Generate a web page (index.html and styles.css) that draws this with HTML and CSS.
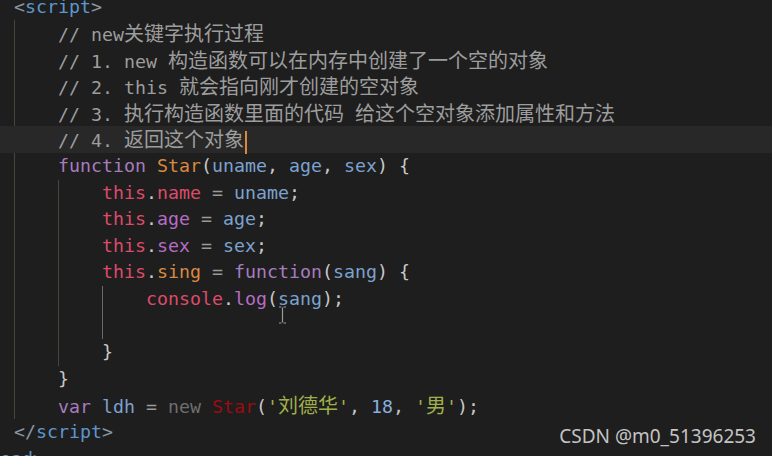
FILE: index.html
```html
<!DOCTYPE html>
<html>
<head>
<meta charset="utf-8">
<link rel="stylesheet" href="styles.css">
</head>
<body>
<div class="editor">
  <div class="line ind0"><span class="tb">&lt;</span><span class="tn">script</span><span class="tb">&gt;</span></div>
  <div class="block g1">
    <div class="line c">// new<span class="cj">关键字执行过程</span></div>
    <div class="line c">// 1. new <span class="cj">构造函数可以在内存中创建了一个空的对象</span></div>
    <div class="line c">// 2. this <span class="cj">就会指向刚才创建的空对象</span></div>
    <div class="line c">// 3. <span class="cj">执行构造函数里面的代码</span> <span class="cj">给这个空对象添加属性和方法</span></div>
    <div class="line c cur">// 4. <span class="cj">返回这个对象</span><span class="caret"></span></div>
    <div class="line"><span class="kw">function</span> <span class="fn">Star</span><span class="p">(</span><span class="v">uname</span><span class="p">, </span><span class="v">age</span><span class="p">, </span><span class="v">sex</span><span class="p">) {</span></div>
    <div class="block g2">
      <div class="line"><span class="th">this</span><span class="p">.</span><span class="th">name</span> <span class="op">=</span> <span class="v">uname</span><span class="p">;</span></div>
      <div class="line"><span class="th">this</span><span class="p">.</span><span class="pr">age</span> <span class="op">=</span> <span class="v">age</span><span class="p">;</span></div>
      <div class="line"><span class="th">this</span><span class="p">.</span><span class="pr">sex</span> <span class="op">=</span> <span class="v">sex</span><span class="p">;</span></div>
      <div class="line"><span class="th">this</span><span class="p">.</span><span class="fn">sing</span> <span class="op">=</span> <span class="kw">function</span><span class="p">(</span><span class="v">sang</span><span class="p">) {</span></div>
      <div class="block g3">
        <div class="line"><span class="th">console</span><span class="p">.</span><span class="pr">log</span><span class="p">(</span><span class="v">sang</span><span class="p">);</span></div>
        <div class="line"> </div>
      </div>
      <div class="line"><span class="p">}</span></div>
    </div>
    <div class="line"><span class="p">}</span></div>
    <div class="line"><span class="kw">var</span> <span class="v">ldh</span> <span class="op">=</span> <span class="nw">new</span> <span class="er">Star</span><span class="p">(</span><span class="s">'<span class="cj">刘德华</span>'</span><span class="p">, </span><span class="n">18</span><span class="p">, </span><span class="s">'<span class="cj">男</span>'</span><span class="p">);</span></div>
  </div>
  <div class="line ind0"><span class="tb">&lt;/</span><span class="tn">script</span><span class="tb">&gt;</span></div>
  <div class="line"><span class="tn">ead</span><span class="tb">&gt;</span></div>
</div>
<svg class="ibeam" width="9" height="18" viewBox="0 0 9 18"><path d="M1 1h2.5M5.5 1H8M4.5 1.5v15M1 17h2.5M5.5 17H8" stroke="#9a9a9a" stroke-width="1.2" fill="none"/></svg>
<div class="mark">CSDN @m0_51396253</div>
</body>
</html>
```
FILE: styles.css
```css
html, body {
  margin: 0;
  padding: 0;
  background: #1e1e1e;
  width: 772px;
  height: 456px;
  overflow: hidden;
}
body { position: relative; }
.editor {
  margin-top: -6.5px;
  font-family: "DejaVu Sans Mono", monospace;
  font-size: 18.27px;
  color: #c8c8c8;
}
.line {
  height: 26.6px;
  line-height: 26.6px;
  white-space: pre;
}
.ind0 { padding-left: 14px; }
.block {
  border-left: 1px solid #47463a;
  padding-left: 43px;
}
.g1 { margin-left: 14px; }
.g3 { border-left-color: #6a6a6a; }
.cj {
  font-family: "Noto Sans CJK SC", sans-serif;
  font-size: 20px;
}
.cur {
  background: #282828;
  margin-left: -58px;
  padding-left: 58px;
  width: 772px;
  box-sizing: border-box;
}
.caret {
  display: inline-block;
  width: 2px;
  height: 23px;
  background: #d8893f;
  vertical-align: middle;
  margin-left: 1px;
}
.c { color: #9d9d9d; }
.tb { color: #8a96a2; }
.tn { color: #5f96cb; }
.kw { color: #a77bbf; }
.fn { color: #d8893f; }
.p { color: #c8c8c8; }
.v { color: #7ca2cf; }
.th { color: #dc4b69; }
.pr { color: #b46cc4; }
.op { color: #9a9a9a; }
.nw { color: #6e6e6e; }
.er { color: #9a0c12; }
.s { color: #9fb04a; }
.n { color: #8aaede; }
.ibeam {
  position: absolute;
  left: 278px;
  top: 306px;
}
.mark {
  position: absolute;
  right: 16px;
  top: 423px;
  font-family: "Noto Sans", "Open Sans", sans-serif;
  font-size: 19px;
  color: #c4c4c4;
}
```
